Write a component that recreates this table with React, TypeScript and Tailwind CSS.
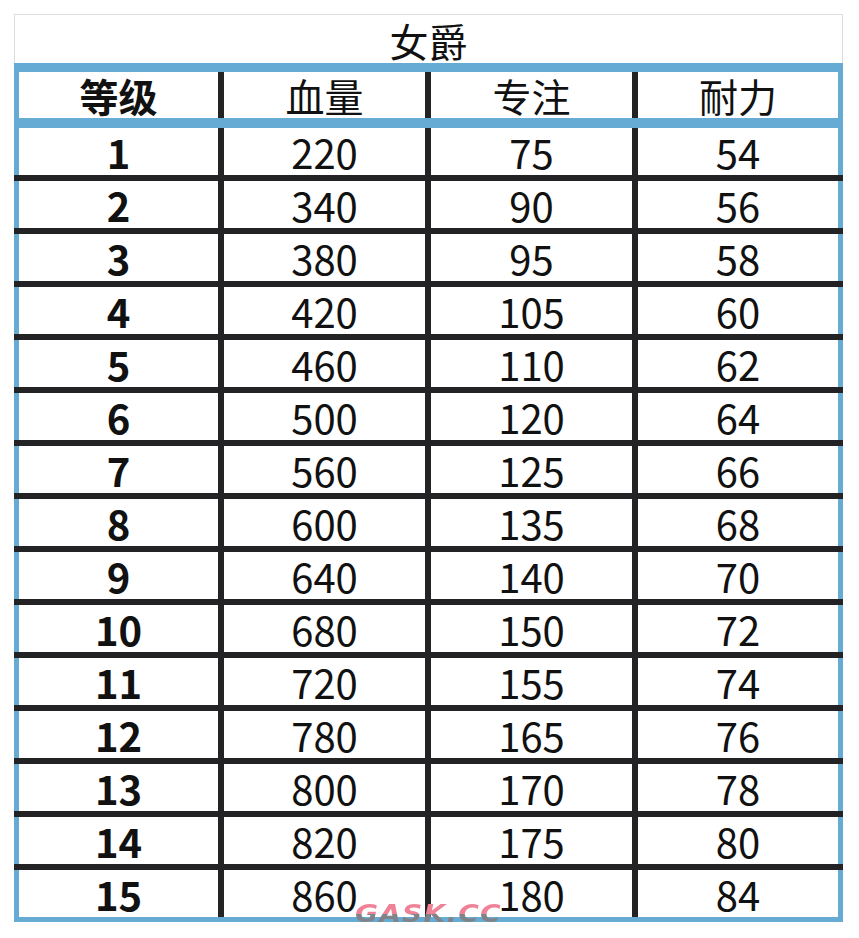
import React from "react";

const rows: [number, number, number, number][] = [
  [1, 220, 75, 54],
  [2, 340, 90, 56],
  [3, 380, 95, 58],
  [4, 420, 105, 60],
  [5, 460, 110, 62],
  [6, 500, 120, 64],
  [7, 560, 125, 66],
  [8, 600, 135, 68],
  [9, 640, 140, 70],
  [10, 680, 150, 72],
  [11, 720, 155, 74],
  [12, 780, 165, 76],
  [13, 800, 170, 78],
  [14, 820, 175, 80],
  [15, 860, 180, 84],
];

const font = { fontFamily: '"Noto Sans CJK SC", "Noto Sans", sans-serif' };

function Divider() {
  return <div className="w-[6px] self-stretch bg-[#232326]" />;
}

function Row({
  cells,
  height,
  boldFirst,
}: {
  cells: (string | number)[];
  height: string;
  boldFirst?: boolean;
}) {
  return (
    <div className={`flex ${height}`}>
      <div className="w-[5px] bg-[#66abd4]" />
      <div className="w-[199px] flex items-center justify-center">
        <span className={boldFirst ? "font-bold" : ""}>{cells[0]}</span>
      </div>
      <Divider />
      <div className="w-[201px] flex items-center justify-center">{cells[1]}</div>
      <Divider />
      <div className="w-[201px] flex items-center justify-center">{cells[2]}</div>
      <Divider />
      <div className="w-[200px] flex items-center justify-center">{cells[3]}</div>
      <div className="w-[5px] bg-[#66abd4]" />
    </div>
  );
}

export default function App() {
  return (
    <div
      className="relative w-[859px] h-[938px] bg-white pt-[14px] pl-[14px] text-[#111] text-[40px] leading-none"
      style={font}
    >
      <div className="w-[829px]">
        {/* title */}
        <div className="h-[49px] border border-b-0 border-[#dcdcdc] flex items-center justify-center text-[39px] pt-[2px]">
          女爵
        </div>
        <div className="h-[9px] bg-[#66abd4]" />

        {/* header */}
        <div className="text-[39px]">
          <Row cells={["等级", "血量", "专注", "耐力"]} height="h-[46px]" boldFirst />
        </div>
        <div className="h-[10px] bg-[#66abd4]" />

        {/* data */}
        {rows.map((r, i) => (
          <React.Fragment key={r[0]}>
            {i > 0 && <div className="h-[6px] bg-[#232326]" />}
            <Row cells={r} height="h-[47px]" boldFirst />
          </React.Fragment>
        ))}
        <div className="h-[5px] bg-[#66abd4]" />
      </div>

      {/* watermark */}
      <div
        className="absolute left-[355px] top-[902px] origin-left scale-x-[1.17] text-[24px] leading-none font-bold italic tracking-[1px] text-transparent bg-clip-text bg-[linear-gradient(to_bottom,#ef8297_48%,#80848a_48%)]"
        style={{ fontFamily: '"DejaVu Sans", sans-serif' }}
      >
        GASK.CC
      </div>
    </div>
  );
}
